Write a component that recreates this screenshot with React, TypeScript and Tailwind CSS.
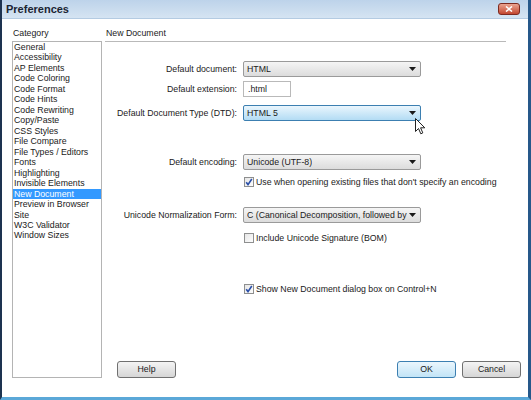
import React from "react";

const categories = [
  "General",
  "Accessibility",
  "AP Elements",
  "Code Coloring",
  "Code Format",
  "Code Hints",
  "Code Rewriting",
  "Copy/Paste",
  "CSS Styles",
  "File Compare",
  "File Types / Editors",
  "Fonts",
  "Highlighting",
  "Invisible Elements",
  "New Document",
  "Preview in Browser",
  "Site",
  "W3C Validator",
  "Window Sizes",
];

function Arrow() {
  return (
    <svg width="7" height="4" viewBox="0 0 7 4" className="shrink-0">
      <path d="M0 0 L7 0 L3.5 4 Z" fill="#1a1a1a" />
    </svg>
  );
}

function Select({ value, active = false }: { value: string; active?: boolean }) {
  return (
    <div
      className={
        active
          ? "w-[178px] h-[16px] flex items-center justify-between gap-[2px] pl-[3px] pr-[4px] rounded-[2px] border border-[#3c7fb1] bg-gradient-to-b from-[#eaf6fd] to-[#b3dcf4]"
          : "w-[178px] h-[16px] flex items-center justify-between gap-[2px] pl-[3px] pr-[4px] rounded-[2px] border border-[#9a9a9a] bg-gradient-to-b from-[#f5f5f5] to-[#dcdcdc]"
      }
    >
      <span className="whitespace-nowrap overflow-hidden">{value}</span>
      <Arrow />
    </div>
  );
}

function Check({ checked, label }: { checked: boolean; label: string }) {
  return (
    <div className="flex items-center gap-[2px] h-[12px]">
      <div className="ml-[1px] w-[10px] h-[10px] border border-[#8e8f8f] bg-gradient-to-br from-[#e6e6e6] to-[#fdfdfd] flex items-center justify-center">
        {checked && (
          <svg width="8" height="8" viewBox="0 0 8 8">
            <path d="M1.2 4.2 L3 6.6 L6.8 1" stroke="#2a4fa8" strokeWidth="1.6" fill="none" />
          </svg>
        )}
      </div>
      <span className="whitespace-nowrap">{label}</span>
    </div>
  );
}

function Button({ label, primary = false }: { label: string; primary?: boolean }) {
  return (
    <div
      className={
        primary
          ? "w-[59px] h-[17px] flex items-center justify-center rounded-[3px] border border-[#3c7fb1] bg-gradient-to-b from-[#eaf6fd] to-[#c2e4f6]"
          : "w-[59px] h-[17px] flex items-center justify-center rounded-[3px] border border-[#707070] bg-gradient-to-b from-[#f4f4f4] to-[#d6d6d6]"
      }
    >
      {label}
    </div>
  );
}

export default function App() {
  return (
    <div className="relative w-[531px] h-[400px] flex flex-col overflow-hidden border-l-2 border-l-[#1d3350] border-r-[3px] border-r-[#26588a] border-b-[3px] border-b-[#5ba8d8] bg-white text-[8.75px] leading-[11px] text-[#1a1a1a] font-['Liberation_Sans',Arial,sans-serif]">
      {/* Title bar */}
      <div className="h-[19px] shrink-0 flex items-center justify-between pl-[4px] pr-[8px] bg-gradient-to-b from-[#bdd3ea] to-[#d5e4f2] border-b border-b-[#b4cbe2]">
        <span className="text-[11px] font-bold text-[#1b2533]">Preferences</span>
        <div className="w-[22px] h-[12px] rounded-[3px] border border-[#7d2a20] bg-gradient-to-b from-[#e9a390] to-[#c2452f] flex items-center justify-center">
          <svg width="8" height="6" viewBox="0 0 8 6">
            <path d="M1 0.5 L7 5.5 M7 0.5 L1 5.5" stroke="white" strokeWidth="1.6" />
          </svg>
        </div>
      </div>

      {/* Body */}
      <div className="flex-1 flex min-h-0">
        {/* Left column */}
        <div className="w-[103px] shrink-0 flex flex-col pl-[10px] pb-[19px]">
          <div className="pt-[8px] pl-[1px] leading-[12px] h-[22px]">Category</div>
          <div className="flex-1 w-[90px] border border-[#b4b4b4] flex flex-col">
            {categories.map((c) => (
              <div
                key={c}
                className={
                  c === "New Document"
                    ? "h-[10.47px] leading-[10.47px] px-[1px] bg-[#3399ff] text-white whitespace-nowrap"
                    : "h-[10.47px] leading-[10.47px] px-[1px] whitespace-nowrap"
                }
              >
                {c}
              </div>
            ))}
          </div>
        </div>

        {/* Right column */}
        <div className="flex-1 flex flex-col pb-[19px] pr-[7px]">
          <div className="pt-[8px] pl-[1px] pb-[2px] leading-[12px] mr-[15px] border-b border-b-[#b9b9b9]">New Document</div>

          <div className="flex items-center mt-[19px]">
            <div className="w-[132px] text-right">Default document:</div>
            <div className="ml-[6px]"><Select value="HTML" /></div>
          </div>
          <div className="flex items-center mt-[4px]">
            <div className="w-[132px] text-right">Default extension:</div>
            <div className="ml-[6px] w-[48px] h-[16px] border border-[#b9b9b9] flex items-center pl-[4px]">.html</div>
          </div>
          <div className="flex items-center mt-[8px]">
            <div className="w-[132px] text-right">Default Document Type (DTD):</div>
            <div className="ml-[6px]"><Select value="HTML 5" active /></div>
          </div>

          <div className="flex items-center mt-[33px]">
            <div className="w-[132px] text-right">Default encoding:</div>
            <div className="ml-[6px]"><Select value="Unicode (UTF-8)" /></div>
          </div>
          <div className="ml-[138px] mt-[6px]">
            <Check checked label="Use when opening existing files that don't specify an encoding" />
          </div>

          <div className="flex items-center mt-[19px]">
            <div className="w-[132px] text-right">Unicode Normalization Form:</div>
            <div className="ml-[6px]"><Select value="C (Canonical Decomposition, followed by" /></div>
          </div>
          <div className="ml-[138px] mt-[9px]">
            <Check checked={false} label="Include Unicode Signature (BOM)" />
          </div>

          <div className="ml-[138px] mt-[39px]">
            <Check checked label="Show New Document dialog box on Control+N" />
          </div>

          <div className="mt-auto flex items-center">
            <div className="ml-[12px]"><Button label="Help" /></div>
            <div className="ml-auto flex gap-[6px]">
              <Button label="OK" primary />
              <Button label="Cancel" />
            </div>
          </div>
        </div>
      </div>

      {/* Mouse cursor */}
      <svg className="absolute left-[413px] top-[118px]" width="11" height="17" viewBox="0 0 11 17">
        <path d="M0.5 0.5 L0.5 13.5 L3.5 10.5 L5.8 15.8 L7.8 14.9 L5.6 9.8 L9.8 9.8 Z" fill="white" stroke="#222" strokeWidth="1" strokeLinejoin="round" />
      </svg>
    </div>
  );
}
